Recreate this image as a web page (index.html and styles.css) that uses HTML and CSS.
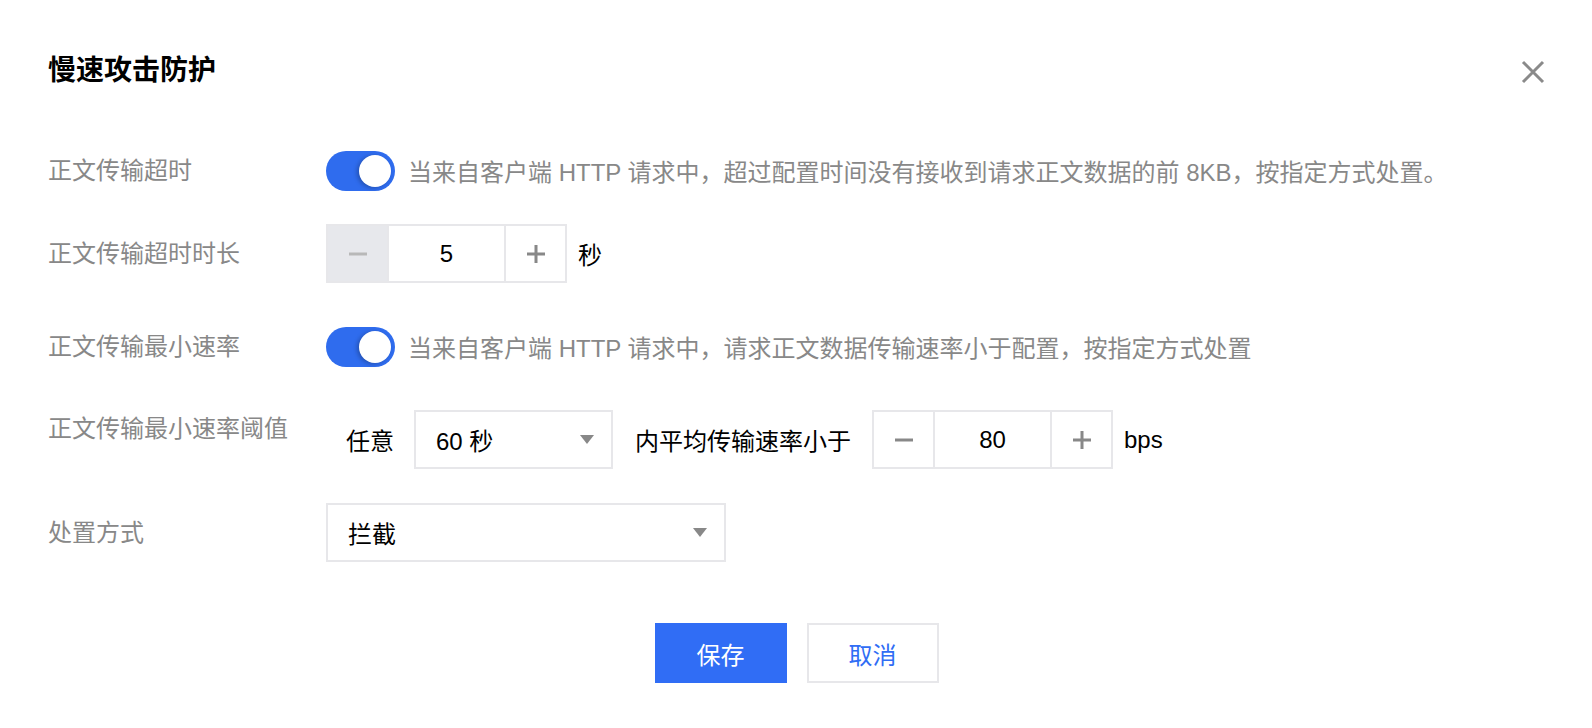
FILE: index.html
```html
<!DOCTYPE html>
<html lang="zh-CN">
<head>
  <meta charset="UTF-8">
  <meta name="viewport" content="width=device-width, initial-scale=1.0">
  <title>慢速攻击防护</title>
  <link rel="stylesheet" href="styles.css">
</head>
<body>
  <div class="dialog">
    <div class="dialog-header">
      <h2>慢速攻击防护</h2>
      <button class="close-btn" aria-label="关闭">
        <svg width="24" height="24" viewBox="0 0 24 24">
          <path d="M2 2 L22 22 M22 2 L2 22" stroke="#8a8a8a" stroke-width="3" fill="none"/>
        </svg>
      </button>
    </div>

    <div class="form">
      <!-- 正文传输超时 -->
      <div class="form-item first">
        <label class="form-label">正文传输超时</label>
        <div class="form-control">
          <span class="switch on"><span class="switch-knob"></span></span>
          <span class="desc">当来自客户端 HTTP 请求中，超过配置时间没有接收到请求正文数据的前 8KB，按指定方式处置。</span>
        </div>
      </div>

      <div class="form-item">
        <label class="form-label">正文传输超时时长</label>
        <div class="form-control">
          <div class="stepper">
            <span class="step-btn disabled">
              <svg width="20" height="20" viewBox="0 0 20 20"><path d="M1 10 H19" stroke="currentColor" stroke-width="3"/></svg>
            </span>
            <span class="step-value">5</span>
            <span class="step-btn">
              <svg width="20" height="20" viewBox="0 0 20 20"><path d="M1 10 H19 M10 1 V19" stroke="currentColor" stroke-width="3"/></svg>
            </span>
          </div>
          <span class="unit">秒</span>
        </div>
      </div>

      <!-- 正文传输最小速率 -->
      <div class="form-item">
        <label class="form-label">正文传输最小速率</label>
        <div class="form-control">
          <span class="switch on"><span class="switch-knob"></span></span>
          <span class="desc">当来自客户端 HTTP 请求中，请求正文数据传输速率小于配置，按指定方式处置</span>
        </div>
      </div>

      <div class="form-item top">
        <label class="form-label">正文传输最小速率阈值</label>
        <div class="form-control inline-group">
          <span class="text">任意</span>
          <div class="select select-sm">
            <span>60 秒</span>
            <span class="arrow"></span>
          </div>
          <span class="text">内平均传输速率小于</span>
          <div class="stepper">
            <span class="step-btn">
              <svg width="20" height="20" viewBox="0 0 20 20"><path d="M1 10 H19" stroke="currentColor" stroke-width="3"/></svg>
            </span>
            <span class="step-value">80</span>
            <span class="step-btn">
              <svg width="20" height="20" viewBox="0 0 20 20"><path d="M1 10 H19 M10 1 V19" stroke="currentColor" stroke-width="3"/></svg>
            </span>
          </div>
          <span class="unit">bps</span>
        </div>
      </div>

      <div class="form-item">
        <label class="form-label">处置方式</label>
        <div class="form-control">
          <div class="select select-lg">
            <span>拦截</span>
            <span class="arrow"></span>
          </div>
        </div>
      </div>
    </div>

    <div class="form-actions">
      <button class="btn btn-primary">保存</button>
      <button class="btn btn-default">取消</button>
    </div>
  </div>
</body>
</html>
```

FILE: styles.css
```css
body {
  font-family: "Liberation Sans", "Noto Sans CJK SC", sans-serif;
  margin: 0;
  padding: 0;
  background-color: #fff;
  color: #000;
}
.dialog {
  padding: 51px 47px 0 48px;
}
.dialog-header {
  display: flex;
  justify-content: space-between;
  align-items: center;
  height: 40px;
}
.dialog-header h2 {
  margin: 0;
  font-size: 28px;
  line-height: 40px;
  font-weight: bold;
  color: #000;
}
.close-btn {
  border: none;
  background: none;
  padding: 0;
  width: 24px;
  height: 24px;
  cursor: pointer;
  margin-top: 2px;
}
.close-btn svg {
  display: block;
}
.form {
  margin-top: 50px;
}
.form-item {
  display: flex;
  align-items: center;
  min-height: 59px;
  margin-bottom: 34px;
}
.form-item.first {
  margin-bottom: 24px;
}
.form-item:last-child {
  margin-bottom: 0;
}
.form-label {
  width: 278px;
  flex-shrink: 0;
  font-size: 24px;
  line-height: 34px;
  color: #888;
}
.form-item.top .form-label {
  align-self: flex-start;
  margin-top: 2px;
}
.form-control {
  display: flex;
  align-items: center;
  font-size: 24px;
}
.switch {
  position: relative;
  display: inline-block;
  width: 69px;
  height: 40px;
  border-radius: 20px;
  background-color: #ccc;
  flex-shrink: 0;
}
.switch.on {
  background-color: #2f6cee;
}
.switch-knob {
  position: absolute;
  top: 4px;
  right: 4px;
  width: 32px;
  height: 32px;
  border-radius: 50%;
  background-color: #fff;
  box-shadow: -2px 1px 4px rgba(0, 0, 0, 0.25);
}
.desc {
  margin-left: 13px;
  color: #888;
  font-size: 24px;
  white-space: nowrap;
}
.stepper {
  display: flex;
  height: 59px;
  border: 2px solid #e7e7ea;
  box-sizing: border-box;
}
.step-btn {
  width: 59px;
  display: flex;
  align-items: center;
  justify-content: center;
  color: #888;
}
.step-btn.disabled {
  background-color: #e7e8ec;
  color: #b8b8b8;
}
.step-value {
  width: 115px;
  display: flex;
  align-items: center;
  justify-content: center;
  border-left: 2px solid #e7e7ea;
  border-right: 2px solid #e7e7ea;
  font-size: 24px;
  color: #000;
}
.unit {
  margin-left: 11px;
  color: #000;
}
.inline-group {
  padding-left: 20px;
}
.text {
  color: #000;
  white-space: nowrap;
}
.select {
  display: flex;
  align-items: center;
  justify-content: space-between;
  height: 59px;
  border: 2px solid #e7e7ea;
  box-sizing: border-box;
  padding: 0 17px 0 20px;
  font-size: 24px;
  color: #000;
}
.select-sm {
  width: 199px;
  margin: 0 22px 0 20px;
}
.select-lg {
  width: 400px;
}
.inline-group .stepper {
  margin-left: 21px;
}
.arrow {
  width: 0;
  height: 0;
  border-left: 7px solid transparent;
  border-right: 7px solid transparent;
  border-top: 9px solid #888;
}
.form-actions {
  display: flex;
  justify-content: center;
  gap: 20px;
  margin-top: 61px;
}
.btn {
  width: 132px;
  height: 60px;
  font-family: "Liberation Sans", "Noto Sans CJK SC", sans-serif;
  font-size: 24px;
  border-radius: 0;
  cursor: pointer;
  box-sizing: border-box;
}
.btn-primary {
  background-color: #306df5;
  color: #fff;
  border: none;
}
.btn-default {
  background-color: #fff;
  color: #306df5;
  border: 2px solid #e7e7ea;
}
```
